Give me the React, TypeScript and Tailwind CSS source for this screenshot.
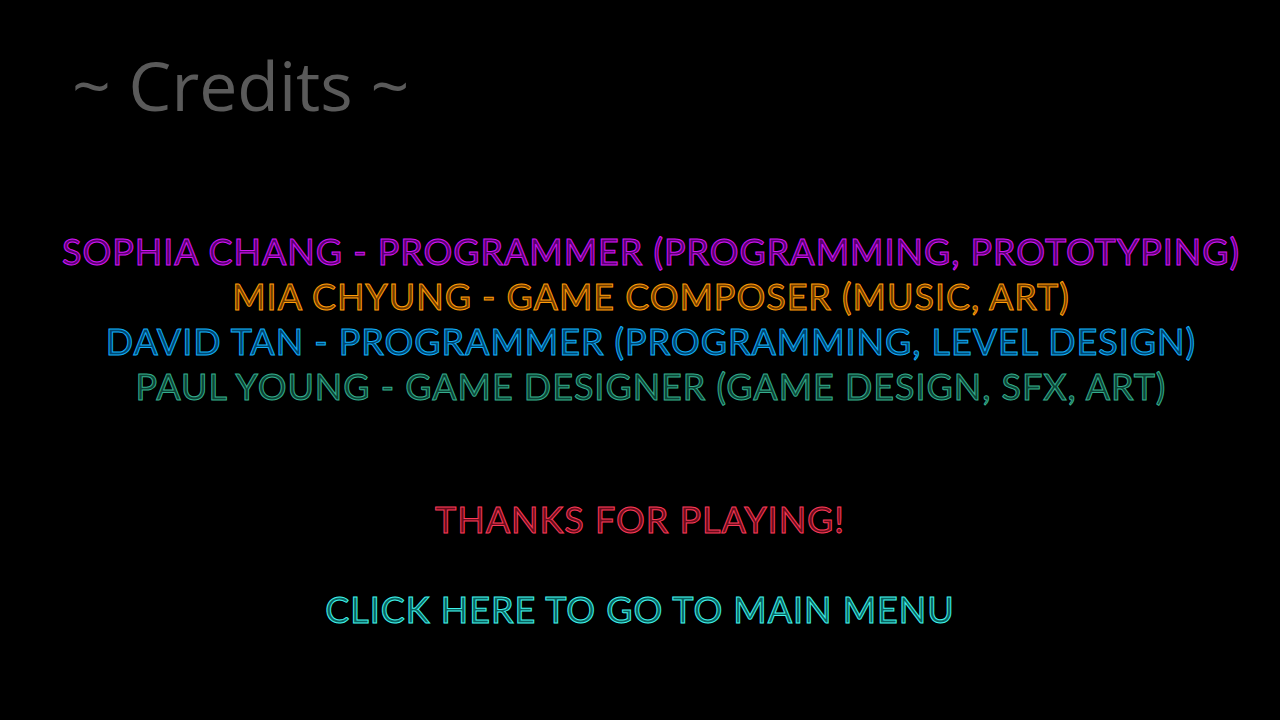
export default function App() {
  const line = "font-['Lato',sans-serif] font-normal text-[36px] leading-[45px] tracking-[0.95px] whitespace-nowrap";
  return (
    <div className="w-[1280px] h-[720px] bg-black overflow-hidden flex flex-col">
      <div className="pl-[72px] pt-[40px] h-[140px] font-['Open_Sans',sans-serif] text-[68px] leading-[90px] text-[#5a5a5a]">
        ~ Credits ~
      </div>
      <div className="flex flex-col items-center pl-[22px] mt-[89px]">
        <div className={`${line} text-[#5a0070] [-webkit-text-stroke:1px_#d214f5]`}>SOPHIA CHANG - PROGRAMMER (PROGRAMMING, PROTOTYPING)</div>
        <div className={`${line} text-[#6e3c00] [-webkit-text-stroke:1px_#ff9c08]`}>MIA CHYUNG - GAME COMPOSER (MUSIC, ART)</div>
        <div className={`${line} text-[#00466e] [-webkit-text-stroke:1px_#12adf8]`}>DAVID TAN - PROGRAMMER (PROGRAMMING, LEVEL DESIGN)</div>
        <div className={`${line} text-[#0c4436] [-webkit-text-stroke:1px_#34ac8c]`}>PAUL YOUNG - GAME DESIGNER (GAME DESIGN, SFX, ART)</div>
      </div>
      <div className="flex flex-col items-center mt-[88px]">
        <div className={`${line} text-[#6a0c1c] [-webkit-text-stroke:1px_#fa3a58]`}>THANKS FOR PLAYING!</div>
        <div className={`${line} mt-[45px] text-[#086460] [-webkit-text-stroke:1px_#40f2ea] cursor-pointer`}>CLICK HERE TO GO TO MAIN MENU</div>
      </div>
    </div>
  );
}
